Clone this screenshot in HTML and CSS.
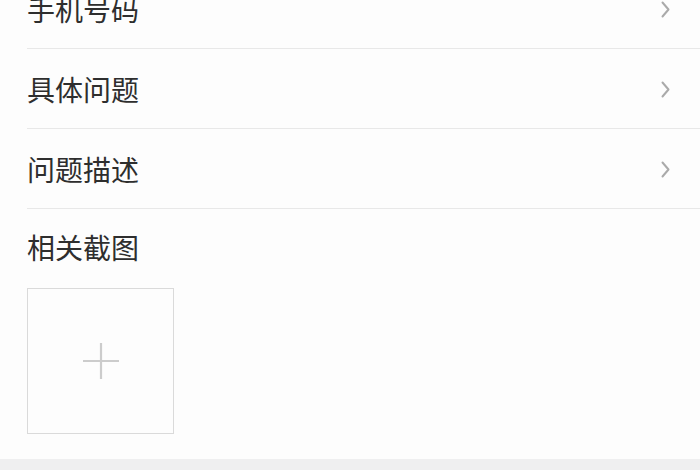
FILE: index.html
```html
<!DOCTYPE html>
<html lang="zh-CN">
<head>
<meta charset="utf-8">
<title>反馈</title>
<link rel="stylesheet" href="styles.css">
</head>
<body>
<div class="page">
  <div class="list">
    <div class="row">
      <div class="row-inner">
        <span class="label">手机号码</span>
        <svg class="chev" width="9" height="17" viewBox="0 0 9 17"><path d="M1.5 1.5 L7.5 8.5 L1.5 15.5" fill="none" stroke="#aaaaaa" stroke-width="2" stroke-linecap="round" stroke-linejoin="round"/></svg>
      </div>
    </div>
    <div class="row">
      <div class="row-inner">
        <span class="label">具体问题</span>
        <svg class="chev" width="9" height="17" viewBox="0 0 9 17"><path d="M1.5 1.5 L7.5 8.5 L1.5 15.5" fill="none" stroke="#aaaaaa" stroke-width="2" stroke-linecap="round" stroke-linejoin="round"/></svg>
      </div>
    </div>
    <div class="row">
      <div class="row-inner">
        <span class="label">问题描述</span>
        <svg class="chev" width="9" height="17" viewBox="0 0 9 17"><path d="M1.5 1.5 L7.5 8.5 L1.5 15.5" fill="none" stroke="#aaaaaa" stroke-width="2" stroke-linecap="round" stroke-linejoin="round"/></svg>
      </div>
    </div>
  </div>
  <div class="shots">
    <div class="label shots-title">相关截图</div>
    <div class="upload">
      <svg width="38" height="38" viewBox="0 0 38 38"><path d="M19 1 V37 M1 19 H37" stroke="#cccccc" stroke-width="2.2" fill="none"/></svg>
    </div>
  </div>
  <div class="band"></div>
</div>
</body>
</html>
```
FILE: styles.css
```css
html, body {
  margin: 0;
  padding: 0;
  background: #fdfdfd;
}
body {
  font-family: "Noto Sans CJK SC", "Noto Sans", sans-serif;
  color: #333;
  overflow: hidden;
  height: 470px;
}
.page {
  display: flex;
  flex-direction: column;
  height: 470px;
}
.list {
  margin-top: -31px;
}
.row {
  padding-left: 27px;
}
.row-inner {
  height: 79px;
  border-bottom: 1px solid #e8e8e8;
  display: flex;
  align-items: center;
  justify-content: space-between;
  padding-right: 30px;
}
.label {
  font-size: 28px;
  line-height: 28px;
  color: #2e2e2e;
}
.chev {
  display: block;
  margin-top: 2px;
}
.shots {
  padding-left: 27px;
  padding-top: 24px;
  flex: 1;
}
.shots-title {
  margin-bottom: 27px;
}
.upload {
  width: 145px;
  height: 144px;
  border: 1.5px solid #dadada;
  display: flex;
  align-items: center;
  justify-content: center;
  box-sizing: content-box;
}
.band {
  height: 11px;
  background: #efeff0;
}
```
